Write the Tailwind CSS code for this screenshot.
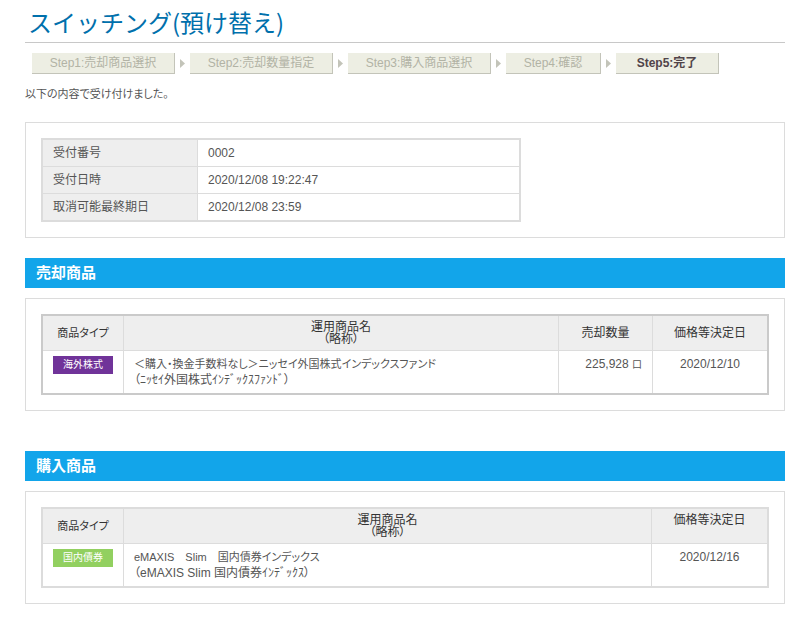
<!DOCTYPE html>
<html lang="ja">
<head>
    <meta charset="UTF-8">
    <meta name="viewport" content="width=device-width, initial-scale=1.0">
    <title>スイッチング(預け替え)</title>
    <script src="https://cdn.jsdelivr.net/npm/@tailwindcss/browser@4"></script>
</head>
<body class="bg-white pl-[25px] pr-[14px] pb-[14px] font-['Liberation_Sans','Noto_Sans_CJK_JP',sans-serif] text-[12px] leading-[16px] text-[#555555] [font-feature-settings:'palt']">
    <!-- Page title -->
    <header class="border-b border-[#c8c8c8] pt-[6px] pb-[4px] pl-[3px]">
        <h1 class="font-['Noto_Sans_CJK_JP',sans-serif] text-[24px] leading-[32px] text-[#0070ac] [font-feature-settings:normal]">スイッチング(預け替え)</h1>
    </header>

    <!-- Steps -->
    <ol class="mt-[10px] ml-[7px] flex items-center text-center leading-[20px] text-[#b2b3a5]">
        <li class="w-[143px] border-r border-b border-[#c3c4b9] bg-[#edeee3]">Step1:売却商品選択</li>
        <li class="flex w-[15px] justify-center" aria-hidden="true"><svg class="h-[9px] w-[5px]" viewBox="0 0 5 9" fill="#c3c4b9"><path d="M0 0L5 4.500L0 9Z"/></svg></li>
        <li class="w-[143px] border-r border-b border-[#c3c4b9] bg-[#edeee3]">Step2:売却数量指定</li>
        <li class="flex w-[15px] justify-center" aria-hidden="true"><svg class="h-[9px] w-[5px]" viewBox="0 0 5 9" fill="#c3c4b9"><path d="M0 0L5 4.500L0 9Z"/></svg></li>
        <li class="w-[143px] border-r border-b border-[#c3c4b9] bg-[#edeee3]">Step3:購入商品選択</li>
        <li class="flex w-[15px] justify-center" aria-hidden="true"><svg class="h-[9px] w-[5px]" viewBox="0 0 5 9" fill="#c3c4b9"><path d="M0 0L5 4.500L0 9Z"/></svg></li>
        <li class="w-[95px] border-r border-b border-[#c3c4b9] bg-[#edeee3]">Step4:確認</li>
        <li class="flex w-[15px] justify-center" aria-hidden="true"><svg class="h-[9px] w-[5px]" viewBox="0 0 5 9" fill="#c3c4b9"><path d="M0 0L5 4.500L0 9Z"/></svg></li>
        <li class="w-[103px] border-r border-b border-[#c3c4b9] bg-[#edeee3] font-bold text-[#514449]" aria-current="step">Step5:完了</li>
    </ol>

    <p class="mt-3 text-[11px] leading-[16px]">以下の内容で受け付けました。</p>

    <!-- Receipt -->
    <section class="mt-5 border border-[#dcdcdc] p-[15px]">
        <table class="w-[480px] table-fixed border-separate border-spacing-0 border-2 border-[#dcdcdc]">
            <tbody>
                <tr>
                    <th scope="row" class="w-[155px] border-r border-b border-[#dcdcdc] bg-[#eeeeee] px-[10px] py-[5px] text-left font-normal">受付番号</th>
                    <td class="border-b border-[#dcdcdc] px-[10px] py-[5px]">0002</td>
                </tr>
                <tr>
                    <th scope="row" class="border-r border-b border-[#dcdcdc] bg-[#eeeeee] px-[10px] py-[5px] text-left font-normal">受付日時</th>
                    <td class="border-b border-[#dcdcdc] px-[10px] py-[5px]">2020/12/08 19:22:47</td>
                </tr>
                <tr>
                    <th scope="row" class="border-r border-[#dcdcdc] bg-[#eeeeee] px-[10px] py-[5px] text-left font-normal">取消可能最終期日</th>
                    <td class="px-[10px] py-[5px]">2020/12/08 23:59</td>
                </tr>
            </tbody>
        </table>
    </section>

    <!-- Sell -->
    <h2 class="mt-5 bg-[#12a5ea] px-[11px] text-[15px] leading-[30px] font-bold text-white">売却商品</h2>
    <section class="mt-[10px] border border-[#dcdcdc] p-[15px]">
        <table class="w-full table-fixed border-separate border-spacing-0 border-2 border-[#cacaca]">
            <thead class="bg-[#eeeeee] leading-[12px] text-[#333333]">
                <tr>
                    <th scope="col" class="w-[81px] border-r border-b border-[#dcdcdc] py-[5px] text-[11px] font-normal">商品タイプ</th>
                    <th scope="col" class="border-r border-b border-[#dcdcdc] py-[5px] font-normal">運用商品名<br>（略称）</th>
                    <th scope="col" class="w-[94px] border-r border-b border-[#dcdcdc] py-[5px] font-normal">売却数量</th>
                    <th scope="col" class="w-[114px] border-b border-[#dcdcdc] py-[5px] font-normal">価格等決定日</th>
                </tr>
            </thead>
            <tbody class="align-top">
                <tr>
                    <td class="border-r border-[#dcdcdc] px-[10px] py-[5px]"><span class="block bg-[#703399] text-center text-[10px] leading-[18px] text-white">海外株式</span></td>
                    <td class="border-r border-[#dcdcdc] px-[10px] py-[5px]">
                        <div class="text-[11px] leading-[16px]">＜購入・換金手数料なし＞ニッセイ外国株式インデックスファンド</div>
                        <div>（ﾆｯｾｲ外国株式ｲﾝﾃﾞｯｸｽﾌｧﾝﾄﾞ）</div>
                    </td>
                    <td class="border-r border-[#dcdcdc] px-[10px] py-[5px] text-right">225,928 <span class="text-[10px]">口</span></td>
                    <td class="px-[10px] py-[5px] text-center">2020/12/10</td>
                </tr>
            </tbody>
        </table>
    </section>

    <!-- Buy -->
    <h2 class="mt-10 bg-[#12a5ea] px-[11px] text-[15px] leading-[30px] font-bold text-white">購入商品</h2>
    <section class="mt-[10px] border border-[#dcdcdc] p-[15px]">
        <table class="w-full table-fixed border-separate border-spacing-0 border-2 border-[#dcdcdc]">
            <thead class="bg-[#eeeeee] leading-[12px] text-[#333333]">
                <tr>
                    <th scope="col" class="w-[81px] border-r border-b border-[#dcdcdc] py-[5px] text-[11px] font-normal">商品タイプ</th>
                    <th scope="col" class="border-r border-b border-[#dcdcdc] py-[5px] font-normal">運用商品名<br>（略称）</th>
                    <th scope="col" class="w-[115px] border-b border-[#dcdcdc] py-[5px] align-top font-normal">価格等決定日</th>
                </tr>
            </thead>
            <tbody class="align-top">
                <tr>
                    <td class="border-r border-[#dcdcdc] px-[10px] py-[5px]"><span class="block bg-[#92d060] text-center text-[10px] leading-[18px] text-white">国内債券</span></td>
                    <td class="border-r border-[#dcdcdc] px-[10px] py-[5px]">
                        <div class="text-[11px] leading-[16px]">eMAXIS　Slim　国内債券インデックス</div>
                        <div>（eMAXIS Slim 国内債券ｲﾝﾃﾞｯｸｽ）</div>
                    </td>
                    <td class="px-[10px] py-[5px] text-center">2020/12/16</td>
                </tr>
            </tbody>
        </table>
    </section>
</body>
</html>
